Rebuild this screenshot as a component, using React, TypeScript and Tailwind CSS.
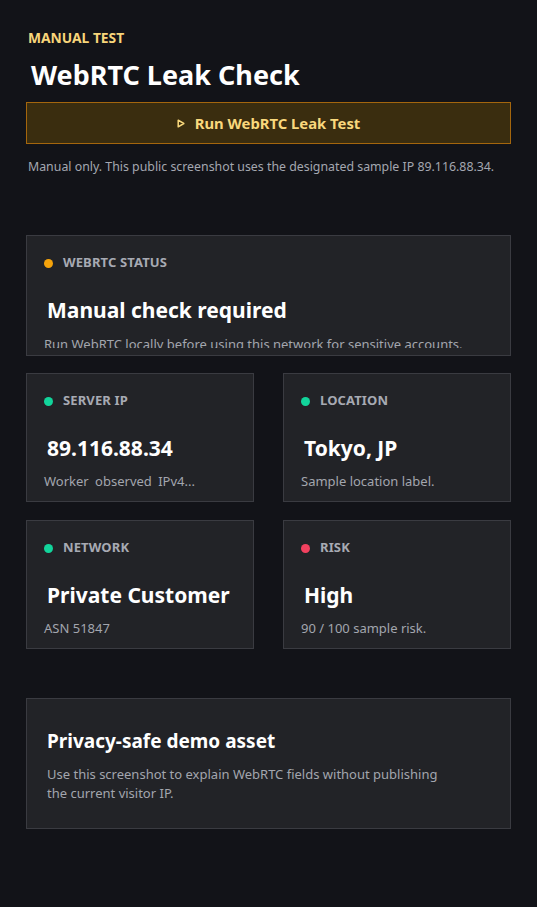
import type { ReactNode } from "react";

type Tone = "amber" | "green" | "red";

const dotClass: Record<Tone, string> = {
  amber: "bg-[#f5a30b]",
  green: "bg-[#12d49b]",
  red: "bg-[#f2415f]",
};

interface StatCardProps {
  tone: Tone;
  label: string;
  value: string;
  note: ReactNode;
  clipNote?: boolean;
  className?: string;
}

function StatCard({ tone, label, value, note, clipNote = false, className = "" }: StatCardProps) {
  return (
    <div
      className={`overflow-hidden border border-[#3a3b41] bg-[#222327] pl-[17px] pr-4 pt-[18px] ${className}`}
    >
      {/* Label row */}
      <div className="flex h-[18px] items-center gap-[10px]">
        <span className={`h-[9px] w-[9px] rounded-full ${dotClass[tone]}`} />
        <span className="text-[13px] font-bold tracking-[0.01em] text-[#a7aab3]">
          {label}
        </span>
      </div>

      <div className="mt-6 pl-[3px] text-[21px] font-bold leading-[28px] text-white">
        {value}
      </div>

      <div
        className={`text-[13px] leading-[19px] text-[#a3a6ae] ${
          clipNote ? "mt-[11px] h-[13px] overflow-hidden" : "mt-[10px]"
        }`}
      >
        {note}
      </div>
    </div>
  );
}

export default function App() {
  return (
    <div
      className="min-h-[907px] bg-[#121318] px-[26px] pt-[29px]"
      style={{ fontFamily: '"Noto Sans", "Open Sans", sans-serif' }}
    >
      {/* Header */}
      <div className="pl-[2px] text-[13.8px] font-bold leading-[18px] text-[#f7d57a]">
        MANUAL TEST
      </div>
      <h1 className="mt-[9px] pl-[5px] text-[27px] font-bold leading-[38px] text-white">
        WebRTC Leak Check
      </h1>

      <button className="mt-[8px] flex h-[42px] w-full items-center justify-center gap-[10px] border border-[#a4660d] bg-[#3a2d0f] text-[14.8px] font-bold text-[#f9d87c]">
        <svg width="8" height="9" viewBox="0 0 8 9" fill="none">
          <path d="M1.2 1.2 L6.8 4.5 L1.2 7.8 Z" stroke="#f9d87c" strokeWidth="1.5" strokeLinejoin="round" />
        </svg>
        Run WebRTC Leak Test
      </button>

      <p className="mt-[14px] pl-[2px] text-[12.35px] leading-[18px] text-[#a4a7b0]">
        Manual only. This public screenshot uses the designated sample IP 89.116.88.34.
      </p>

      {/* Status cards */}
      <StatCard
        className="mt-[59px] h-[121px]"
        tone="amber"
        label="WEBRTC STATUS"
        value="Manual check required"
        note="Run WebRTC locally before using this network for sensitive accounts."
        clipNote
      />

      <div className="mt-[17px] grid grid-cols-2 gap-x-[29px] gap-y-[18px]">
        <StatCard
          className="h-[129px]"
          tone="green"
          label="SERVER IP"
          value="89.116.88.34"
          note={<span className="[word-spacing:3px]">Worker observed IPv4...</span>}
        />
        <StatCard
          className="h-[129px]"
          tone="green"
          label="LOCATION"
          value="Tokyo, JP"
          note="Sample location label."
        />
        <StatCard
          className="h-[129px]"
          tone="green"
          label="NETWORK"
          value="Private Customer"
          note="ASN 51847"
        />
        <StatCard
          className="h-[129px]"
          tone="red"
          label="RISK"
          value="High"
          note="90 / 100 sample risk."
        />
      </div>

      {/* Footer note */}
      <div className="mt-[49px] h-[131px] border border-[#3a3b41] bg-[#222327] pl-5 pr-4 pt-[29px]">
        <h2 className="text-[19px] font-bold leading-[26px] text-white">
          Privacy-safe demo asset
        </h2>
        <p className="mt-[11px] max-w-[400px] text-[13px] leading-[19px] text-[#a3a6ae]">
          Use this screenshot to explain WebRTC fields without publishing the current visitor IP.
        </p>
      </div>
    </div>
  );
}
